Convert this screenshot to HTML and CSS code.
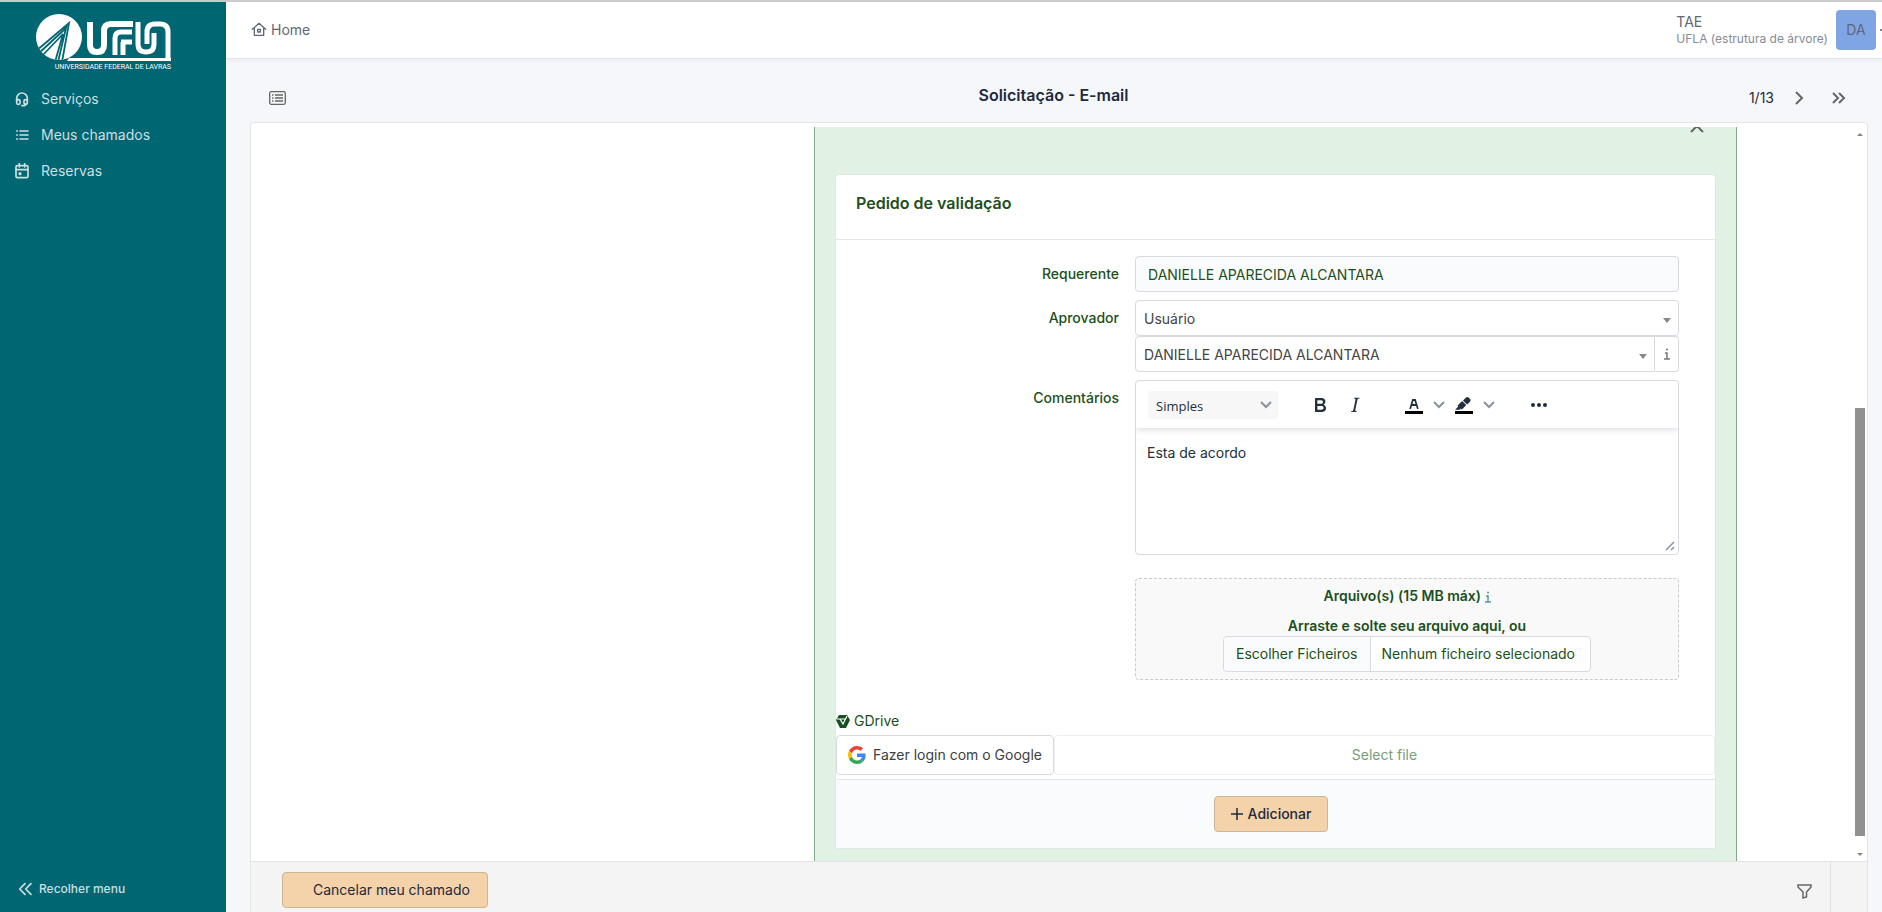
FILE: index.html
```html
<!DOCTYPE html>
<html lang="pt-BR">
<head>
<meta charset="utf-8">
<title>Solicitação - E-mail</title>
<link rel="stylesheet" href="styles.css">
</head>
<body>
<div class="app">
  <aside class="sidebar">
    <a class="logo" href="#" aria-label="UFLA">
      <svg class="logo-mark" viewBox="0 0 135 48" width="135" height="48">
        <defs><clipPath id="disc"><circle cx="23" cy="23" r="23"/></clipPath></defs>
        <circle cx="23" cy="23" r="23" fill="#fff"/>
        <g clip-path="url(#disc)" fill="none" stroke="#006672" stroke-width="1.8">
          <path d="M0 37 33 9 26 48M5 43 27 20 19 48M2 40 30 14 22 48"/>
        </g>
        <g fill="none" stroke="#fff" stroke-width="6">
          <path d="M54 8v23q0 7 7 7t7-7V17q0-7 7-7h22"/>
        </g>
        <g fill="none" stroke="#fff" stroke-width="5">
          <path d="M79 41V24q0-6 6-6h11M85 28h11M87 41V28"/>
          <path d="M102 8v22q0 8 8 8t8-8V19"/>
          <path d="M111 30V18q0-8 8-8h5q8 0 8 8v26"/>
        </g>
        <path d="M33 44h102v3H31z" fill="#fff"/>
      </svg>
      <span class="logo-text">UNIVERSIDADE FEDERAL DE LAVRAS</span>
    </a>
    <nav class="menu">
      <a href="#"><svg class="ic" viewBox="0 0 24 24"><rect x="4" y="13" width="5" height="7" rx="2"/><rect x="15" y="13" width="5" height="7" rx="2"/><path d="M4 15v-4a8 8 0 0 1 16 0v4M18 19a6 3 0 0 1-6 3"/></svg>Serviços</a>
      <a href="#"><svg class="ic" viewBox="0 0 24 24"><path d="M9 6h12M9 12h12M9 18h12M4 6h1M4 12h1M4 18h1"/></svg>Meus chamados</a>
      <a href="#"><svg class="ic" viewBox="0 0 24 24"><rect x="3" y="4" width="18" height="18" rx="2"/><path d="M16 1v5M8 1v5M3 10h18M8 15h2v2H8z"/></svg>Reservas</a>
    </nav>
    <button class="collapse" type="button"><svg class="ic" viewBox="0 0 24 24"><path d="m12 4-8 8 8 8M21 4l-8 8 8 8"/></svg>Recolher menu</button>
  </aside>
  <div class="page">
    <header class="topbar">
      <a class="home" href="#"><svg class="ic" viewBox="0 0 24 24"><path d="M2 11 12 2l10 9M5 9v11h14V9M10 11h4v4h-4z"/></svg>Home</a>
      <div class="user">
        <div class="user-info"><span class="profile">TAE</span><span class="entity">UFLA (estrutura de árvore)</span></div>
        <span class="avatar">DA</span>
        <span class="user-caret"></span>
      </div>
    </header>
    <main class="content">
      <div class="nav-row">
        <button class="icon-btn" type="button" aria-label="Lista"><svg class="list-ic" viewBox="0 0 17 14" width="17" height="14"><rect x=".7" y=".7" width="15.600" height="12.600" rx="1.500"/><path d="M3 4h1.500M3 7h1.500M3 10h1.500M6 4h8M6 7h8M6 10h8"/></svg></button>
        <h1>Solicitação - E-mail</h1>
        <div class="pager"><span>1/13</span>
          <button class="icon-btn" type="button" aria-label="Próximo"><svg viewBox="0 0 14 14" width="14" height="14"><path d="m4 1 6 6-6 6"/></svg></button>
          <button class="icon-btn" type="button" aria-label="Último"><svg viewBox="0 0 14 14" width="14" height="14"><path d="m1 2 5 5-5 5M7 2l5 5-5 5"/></svg></button>
        </div>
      </div>
      <section class="ticket">
        <div class="ticket-body">
          <div class="timeline">
            <div class="answer">
              <button class="fold" type="button" aria-label="Fechar"><svg viewBox="0 0 14 8" width="14" height="8"><path d="m1 7 6-6 6 6"/></svg></button>
              <form class="card">
                <h2>Pedido de validação</h2>
                <div class="fields">
                  <div class="row"><label for="req">Requerente</label><input id="req" class="box readonly" value="DANIELLE APARECIDA ALCANTARA" readonly></div>
                  <div class="row"><label for="kind">Aprovador</label>
                    <div class="stack">
                      <div class="select-wrap"><select id="kind" class="box"><option>Usuário</option></select></div>
                      <div class="joined">
                        <div class="select-wrap"><select class="box" aria-label="Usuário aprovador"><option>DANIELLE APARECIDA ALCANTARA</option></select></div>
                        <button class="info" type="button" aria-label="Informações"><svg class="info-ic" viewBox="0 0 6 12" width="6" height="12"><path d="M1 5h2v6M0 11h6M2 1.500h2"/></svg></button>
                      </div>
                    </div>
                  </div>
                  <div class="row"><label for="comment">Comentários</label>
                    <div class="editor">
                      <div class="tools">
                        <div class="style-wrap"><select aria-label="Estilo"><option>Simples</option></select><svg class="chev" viewBox="0 0 12 8" width="12" height="8"><path d="m1 1 5 5 5-5"/></svg></div>
                        <div class="group marks">
                          <button type="button" aria-label="Negrito"><svg viewBox="0 0 24 24" width="24" height="24"><path fill-rule="evenodd" d="M7.800 19c-.3 0-.5 0-.6-.2l-.2-.5V5.700c0-.2 0-.4.2-.5l.6-.2h5c1.500 0 2.700.3 3.500 1 .7.600 1.100 1.400 1.100 2.500a3 3 0 0 1-.6 1.900c-.4.600-1 1-1.600 1.200.4.100.9.300 1.300.6s.8.700 1 1.200c.4.400.5 1 .5 1.600 0 1.300-.4 2.300-1.300 3-.8.700-2.100 1-3.800 1H7.800Zm5-8.300c.6 0 1.200-.1 1.600-.5.400-.3.600-.7.600-1.300 0-1.100-.8-1.700-2.300-1.700H9.300v3.500h3.400Zm.5 6c.7 0 1.300-.1 1.700-.4.400-.4.600-.9.600-1.500s-.2-1-.7-1.400c-.4-.3-1-.4-2-.4H9.400v3.800h4Z"/></svg></button>
                          <button type="button" aria-label="Itálico"><svg viewBox="0 0 24 24" width="24" height="24"><path d="m16.700 4.700-.1.900h-.3c-.6 0-1 0-1.400.3-.3.300-.4.600-.5 1.100l-2.100 9.800v.6c0 .5.400.8 1.400.8h.2l-.2.800H8l.2-.8h.2c1.100 0 1.800-.5 2-1.500l2-9.800.1-.5c0-.6-.4-.8-1.400-.8h-.3l.2-.9h5.800Z"/></svg></button>
                        </div>
                        <div class="group colors">
                          <button type="button" aria-label="Cor do texto"><svg viewBox="0 0 24 24" width="24" height="24"><path fill="#000" d="M3 18h18v3H3z"/><path d="M8.700 16h-.8a.5.500 0 0 1-.5-.6l2.700-9c.1-.3.300-.4.500-.4h2.800c.2 0 .4.100.5.400l2.700 9a.5.500 0 0 1-.5.600h-.8a.5.500 0 0 1-.4-.4l-.7-2.200c0-.3-.3-.4-.5-.4h-3.400c-.2 0-.4.100-.5.400l-.7 2.200c0 .3-.2.400-.4.400Zm2.600-7.600-.6 2a.5.500 0 0 0 .5.600h1.600a.5.500 0 0 0 .5-.6l-.6-2c0-.3-.3-.4-.5-.4h-.4c-.2 0-.4.100-.5.400Z"/></svg></button>
                          <button type="button" aria-label="Cores do texto"><svg class="chev" viewBox="0 0 12 8" width="12" height="8"><path d="m1 1 5 5 5-5"/></svg></button>
                          <button type="button" aria-label="Cor de fundo"><svg viewBox="0 0 24 24" width="24" height="24"><path fill="#000" d="M3 18h18v3H3z"/><path d="M7.700 16.700H3l3.300-3.300-.7-.8L10.200 8l4 4.100-4 4.200c-.2.200-.6.200-.8 0l-.6-.7-1.100 1.100zm5-7.500L11 7.400l3-2.900a2 2 0 0 1 2.600 0L18 6c.7.700.7 2 0 2.700l-2.900 2.900-1.800-1.800-.5-.6"/></svg></button>
                          <button type="button" aria-label="Cores de fundo"><svg class="chev" viewBox="0 0 12 8" width="12" height="8"><path d="m1 1 5 5 5-5"/></svg></button>
                        </div>
                        <button type="button" aria-label="Mais"><svg viewBox="0 0 24 24" width="24" height="24"><circle cx="6" cy="12" r="2"/><circle cx="12" cy="12" r="2"/><circle cx="18" cy="12" r="2"/></svg></button>
                      </div>
                      <textarea id="comment">Esta de acordo</textarea>
                      <svg class="grip" viewBox="0 0 10 10" width="10" height="10"><path d="M1 9 9 1M6 9l3-3"/></svg>
                    </div>
                  </div>
                  <div class="row"><div class="drop">
                    <p>Arquivo(s) (15 MB máx) <svg class="info-ic teal" viewBox="0 0 6 12" width="6" height="12"><path d="M1 5h2v6M0 11h6M2 1.500h2"/></svg></p>
                    <p>Arraste e solte seu arquivo aqui, ou</p>
                    <div class="file"><button type="button">Escolher Ficheiros</button><span>Nenhum ficheiro selecionado</span></div>
                  </div></div>
                </div>
                <div class="gdrive">
                  <p><svg viewBox="0 0 14 13" width="14" height="13"><path d="M3 0h8l3 5-4 8H4L0 5z" fill="#16501f"/><path d="M1 4h8M4 4l3 5 4-8" fill="none" stroke="#fff" stroke-width="1.200"/></svg>GDrive</p>
                  <div class="gdrive-row">
                    <button class="google" type="button"><svg viewBox="0 0 48 48" width="18" height="18"><path fill="#EA4335" d="M24 9.500c3.540 0 6.710 1.220 9.210 3.600l6.850-6.850C35.900 2.380 30.470 0 24 0 14.620 0 6.510 5.380 2.560 13.220l7.980 6.190C12.430 13.720 17.740 9.500 24 9.500z"/><path fill="#4285F4" d="M46.980 24.550c0-1.570-.15-3.090-.38-4.550H24v9.020h12.940c-.58 2.960-2.260 5.480-4.780 7.180l7.730 6c4.510-4.180 7.090-10.360 7.090-17.650z"/><path fill="#FBBC05" d="M10.530 28.590c-.48-1.450-.76-2.990-.76-4.590s.27-3.140.76-4.590l-7.980-6.190C.92 16.460 0 20.120 0 24s.92 7.540 2.560 10.780z"/><path fill="#34A853" d="M24 48c6.480 0 11.930-2.130 15.890-5.810l-7.730-6c-2.150 1.450-4.920 2.300-8.160 2.300-6.260 0-11.570-4.220-13.470-9.910l-7.980 6.190C6.510 42.620 14.620 48 24 48z"/></svg>Fazer login com o Google</button>
                    <button class="pick" type="button" disabled>Select file</button>
                  </div>
                </div>
                <div class="card-foot"><button class="primary add" type="button"><svg viewBox="0 0 12 12" width="12" height="12"><path d="M6 0v12M0 6h12"/></svg>Adicionar</button></div>
              </form>
            </div>
          </div>
          <div class="scrollbar"><span class="up"></span><span class="thumb"></span><span class="down"></span></div>
        </div>
        <footer class="ticket-foot">
          <button class="primary cancel" type="button">Cancelar meu chamado</button>
          <div class="foot-side"><button class="icon-btn" type="button" aria-label="Filtro"><svg viewBox="0 0 15 15" width="15" height="15"><path d="M1 1h13v2L9.500 8v5L6 14V8L1 3z"/></svg></button></div>
        </footer>
      </section>
    </main>
  </div>
</div>
</body>
</html>
```
FILE: styles.css
```css
* { box-sizing: border-box; }
body { margin: 0; font: 14px/20px Inter, "Noto Sans", sans-serif; color: #1e293b; background: #f5f7fb; }
button, input, select, textarea { font: inherit; color: inherit; margin: 0; padding: 0; border: 0; background: none; appearance: none; outline: 0; }
h1, h2, p { margin: 0; }
a { color: inherit; text-decoration: none; }
svg { display: block; flex: none; }
.app { display: flex; height: 100vh; overflow: hidden; border-top: 2px solid #cacbcc; }
.ic { width: 16px; height: 16px; fill: none; stroke: currentColor; stroke-width: 2; stroke-linecap: round; stroke-linejoin: round; }

.sidebar { width: 226px; flex: none; background: #006672; color: #ccdfe2; display: flex; flex-direction: column; }
.sidebar .ic { stroke-width: 2.500; }
.logo { padding: 12px 0 0 36px; height: 79px; }
.logo-text { display: flex; justify-content: flex-end; width: 135px; font: 7px/11px Roboto, sans-serif; color: #fff; white-space: nowrap; }
.menu { display: flex; flex-direction: column; }
.menu a { display: flex; align-items: center; gap: 11px; height: 36px; padding-left: 14px; }
.collapse { display: flex; align-items: center; gap: 6px; margin-top: auto; height: 46px; padding-left: 17px; font-size: 12px; font-weight: 500; }

.page { flex: 1; min-width: 0; display: flex; flex-direction: column; }
.topbar { height: 57px; flex: none; display: flex; justify-content: space-between; align-items: center; padding-left: 25px; background: #fff; color: #616876; border-bottom: 1px solid #e2e4e9; box-shadow: 0 2px 4px rgba(30, 41, 59, .05); }
.home { display: flex; align-items: center; gap: 4px; }
.user { display: flex; align-items: center; }
.user-info { display: flex; flex-direction: column; line-height: 17px; }
.entity { font-size: 12px; color: #868b96; }
.avatar { width: 40px; height: 40px; margin: 0 4px 0 8px; border-radius: 4px; background: #80a5e4; line-height: 40px; text-align: center; }
.user-caret { width: 2px; height: 2px; background: #7d8390; }

.content { flex: 1; min-height: 0; display: flex; flex-direction: column; padding: 14px 14px 0 24px; }
.nav-row { height: 49px; flex: none; display: grid; grid-template-columns: 1fr auto 1fr; align-items: center; padding: 0 22px 0 19px; }
.nav-row h1 { padding: 0 8px 6px 0; font-size: 16px; font-weight: 600; line-height: 24px; }
.icon-btn { display: flex; }
.icon-btn svg, .fold svg { fill: none; stroke: #666; stroke-width: 2; }
.icon-btn .list-ic { stroke-width: 1.300; }
.pager { display: flex; justify-content: flex-end; align-items: center; gap: 18px; }
.pager .icon-btn:last-child { margin-left: 8px; }

.ticket { flex: 1; min-height: 0; display: flex; flex-direction: column; background: #fff; border: 1px solid #e4e5e9; border-bottom: 0; border-radius: 4px 4px 0 0; }
.ticket-body { flex: 1; min-height: 0; display: flex; justify-content: flex-end; padding: 4px 2px 0 0; }
.timeline { flex: 1; min-width: 0; overflow: hidden; display: flex; justify-content: flex-end; align-items: flex-start; padding-right: 118px; }
.answer { width: 100%; max-width: 923px; padding: 0 20px 16px; background: #e1f1e3; border: solid #84a98a; border-width: 0 1px; color: #1b4f20; }
.fold { display: block; height: 8px; margin: -2px 12px 41px auto; }
.card { background: #fff; border: 1px solid #e4e6e9; border-radius: 4px 4px 0 0; }
.card h2 { height: 65px; padding: 16px 20px; font-size: 16px; font-weight: 600; line-height: 24px; border-bottom: 1px solid #e4e6e9; }
.fields { padding: 16px 36px 0 0; display: flex; flex-direction: column; gap: 8px; }
.row { display: flex; justify-content: flex-end; gap: 16px; }
.row label { flex: 1; text-align: right; padding-top: 8px; font-weight: 500; }
.row > :last-child { width: 65%; max-width: 544px; flex: none; }
.box { display: block; width: 100%; height: 36px; padding: 0 12px; border: 1px solid #d8dae0; border-radius: 4px; }
.readonly { background: #fafbfd; }
.select-wrap { position: relative; flex: 1; color: #444; }
.select-wrap .box { padding: 2px 8px 0; }
.select-wrap::after { content: ""; position: absolute; right: 8px; top: 18px; border: 4px solid transparent; border-top: 5px solid #888; border-bottom: 0; }
.joined { display: flex; }
.joined .box { border-radius: 4px 0 0 4px; }
.info { width: 24px; height: 36px; display: flex; align-items: center; justify-content: center; border: 1px solid #d8dae0; border-left: 0; border-radius: 0 4px 4px 0; }
.info-ic { fill: none; stroke: #777; stroke-width: 1.500; }
.teal { display: inline-block; vertical-align: -2px; stroke: #5a9aa2; }

.editor { position: relative; height: 175px; border: 1px solid #d8dae0; border-radius: 4px; display: flex; flex-direction: column; color: #222f3e; overflow: hidden; }
.tools { display: flex; align-items: center; height: 47px; flex: none; padding: 1px 12px 0; box-shadow: 0 2px 6px rgba(34, 47, 62, .16); }
.tools svg { fill: #222f3e; }
.tools .chev { fill: none; stroke: #8b929c; stroke-width: 2; }
.style-wrap { position: relative; width: 130px; height: 28px; }
.style-wrap select { width: 100%; height: 28px; padding: 2px 8px 0; background: #f7f7f7; border-radius: 3px; font-family: "Open Sans", sans-serif; font-size: 13px; }
.style-wrap .chev { position: absolute; right: 6px; top: 10px; }
.group { display: flex; align-items: center; }
.marks { margin-left: 30px; gap: 11px; }
.colors { margin: 0 32px 0 35px; gap: 7px; }
.editor textarea { flex: 1; padding: 15px 11px; resize: none; }
.grip { position: absolute; right: 3px; bottom: 3px; fill: none; stroke: #8b929c; stroke-width: 1.500; }

.drop { margin-top: 15px; padding: 7px 0; display: flex; flex-direction: column; align-items: center; background: #f9f9f9; border: 1px dashed #c8cacc; border-radius: 4px; font-weight: 600; }
.drop p + p { margin-top: 10px; }
.file { display: flex; height: 36px; background: #fff; border: 1px solid #d8dae0; border-radius: 4px; font-weight: 400; line-height: 34px; }
.file button { padding: 0 12px; background: #fafbfd; border-right: 1px solid #d8dae0; border-radius: 4px 0 0 4px; }
.file span { padding: 0 15px 0 11px; }
.gdrive { margin-top: 31px; padding-bottom: 4px; }
.gdrive p { display: flex; align-items: center; gap: 4px; margin-bottom: 4px; }
.gdrive-row { display: flex; }
.google { display: flex; align-items: center; gap: 7px; height: 40px; padding: 0 11px; border: 1px solid #d8dae0; border-radius: 4px; color: #3c4043; }
.pick { flex: 1; border: 1px solid #eeeff1; border-radius: 4px; color: #7a9b7d; }
.card-foot { display: flex; justify-content: center; padding: 16px 9px 16px 0; background: #fafbfd; border-top: 1px solid #e4e6e9; }
.primary { height: 36px; border: 1px solid #ccb698; border-radius: 4px; background: #f4d3ab; color: #1e293b; }
.add { display: flex; align-items: center; gap: 5px; padding: 0 16px; font-weight: 500; }
.add svg { fill: none; stroke: #1e293b; stroke-width: 1.500; }

.scrollbar { width: 10px; flex: none; display: flex; flex-direction: column; align-items: center; padding: 6px 0 5px; }
.up, .down { border: 3px solid transparent; }
.up { border-top: 0; border-bottom: 3px solid #858585; }
.down { border-bottom: 0; border-top: 3px solid #858585; margin-top: 17px; }
.thumb { width: 10px; height: 428px; margin-top: auto; background: #919191; }

.ticket-foot { height: 51px; flex: none; display: flex; justify-content: space-between; padding-left: 31px; background: #f4f4f4; border-top: 1px solid #e0e2e4; }
.cancel { margin-top: 10px; padding: 0 17px 0 30px; }
.foot-side { width: 68px; display: flex; margin-right: 36px; padding-right: 18px; align-items: center; justify-content: flex-end; border-right: 1px solid #dddfe1; padding-top: 8px; }
.foot-side svg { stroke-width: 1.500; }
```
